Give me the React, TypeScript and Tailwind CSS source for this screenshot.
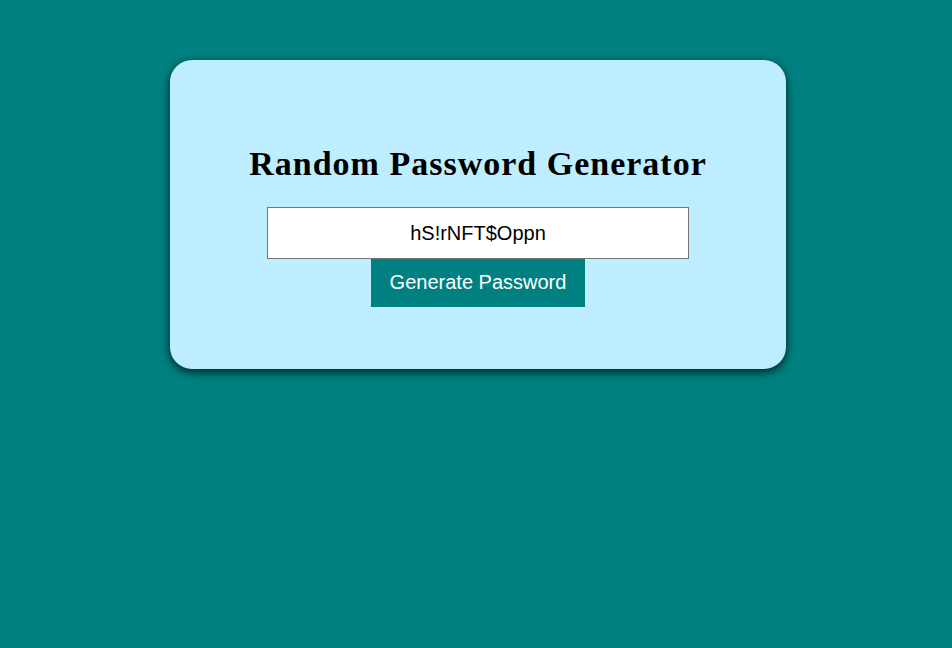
import { useState } from 'react';

const CHARS = 'abcdefghijklmnopqrstuvwxyzABCDEFGHIJKLMNOPQRSTUVWXYZ0123456789!@#$%^&*';

function makePassword(len = 12) {
  let out = '';
  for (let i = 0; i < len; i++) out += CHARS[Math.floor(Math.random() * CHARS.length)];
  return out;
}

export default function App() {
  const [password, setPassword] = useState('hS!rNFT$Oppn');

  return (
    <div className="min-h-screen w-full bg-[#008080] pt-[60px] font-['Liberation_Sans',Arial,sans-serif]">
      <div className="mx-auto flex h-[309px] w-[616px] translate-x-[2px] flex-col items-center rounded-[22px] bg-[#bdedff] pt-[85px] shadow-[0_3px_10px_rgba(0,0,0,0.75)]">
        <h1 className="h-[40px] text-[34px] leading-[38px] font-bold tracking-[1px] text-black font-['Liberation_Serif','Times_New_Roman',serif]">
          Random Password Generator
        </h1>
        <input
          readOnly
          value={password}
          className="mt-[22px] h-[52px] w-[422px] border border-[#767676] bg-white text-center text-[20px] text-black outline-none"
        />
        <button
          onClick={() => setPassword(makePassword())}
          className="h-[48px] w-[214px] bg-[#008080] pb-[2px] text-[20px] text-white"
        >
          Generate Password
        </button>
      </div>
    </div>
  );
}
